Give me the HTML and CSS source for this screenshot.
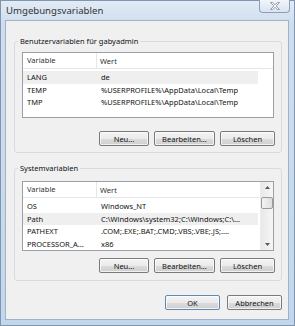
FILE: index.html
```html
<!DOCTYPE html>
<html lang="de">
<head>
  <meta charset="UTF-8">
  <title>Umgebungsvariablen</title>
  <link rel="stylesheet" href="styles.css">
</head>
<body>
  <div class="window">
    <div class="titlebar">
      <span class="title">Umgebungsvariablen</span>
      <button class="close" title="Schließen">
        <svg width="10" height="8" viewBox="0 0 10 8">
          <polygon points="0.5,0.5 2.6,0.5 5,2.8 7.4,0.5 9.5,0.5 6.1,4 9.5,7.5 7.4,7.5 5,5.2 2.6,7.5 0.5,7.5 3.9,4" fill="#fff" stroke="#7d8a99" stroke-width="0.8"/>
        </svg>
      </button>
    </div>

    <div class="client">
      <!-- Benutzervariablen -->
      <fieldset class="group group-user">
        <legend>Benutzervariablen für gabyadmin</legend>
        <div class="list list-user">
          <div class="list-body">
            <div class="list-head">
              <span class="col-var">Variable</span>
              <span class="col-val">Wert</span>
            </div>
            <div class="rows">
              <div class="row hot"><span class="col-var">LANG</span><span class="col-val">de</span></div>
              <div class="row"><span class="col-var">TEMP</span><span class="col-val">%USERPROFILE%\AppData\Local\Temp</span></div>
              <div class="row"><span class="col-var">TMP</span><span class="col-val">%USERPROFILE%\AppData\Local\Temp</span></div>
            </div>
          </div>
        </div>
        <div class="buttons">
          <button class="btn btn-new">Neu...</button>
          <button class="btn btn-edit">Bearbeiten...</button>
          <button class="btn btn-del">Löschen</button>
        </div>
      </fieldset>

      <!-- Systemvariablen -->
      <fieldset class="group group-sys">
        <legend>Systemvariablen</legend>
        <div class="list list-sys">
          <div class="list-body">
            <div class="list-head">
              <span class="col-var">Variable</span>
              <span class="col-val">Wert</span>
            </div>
            <div class="rows">
              <div class="row"><span class="col-var">OS</span><span class="col-val">Windows_NT</span></div>
              <div class="row hot"><span class="col-var">Path</span><span class="col-val">C:\Windows\system32;C:\Windows;C:\...</span></div>
              <div class="row"><span class="col-var">PATHEXT</span><span class="col-val">.COM;.EXE;.BAT;.CMD;.VBS;.VBE;.JS;....</span></div>
              <div class="row"><span class="col-var">PROCESSOR_A...</span><span class="col-val">x86</span></div>
            </div>
          </div>
          <div class="scrollbar">
            <span class="arrow">
              <svg width="5" height="3" viewBox="0 0 5 3"><polygon points="0,3 2.5,0 5,3" fill="#5a5a5a"/></svg>
            </span>
            <span class="track"><span class="thumb"></span></span>
            <span class="arrow">
              <svg width="5" height="3" viewBox="0 0 5 3"><polygon points="0,0 5,0 2.5,3" fill="#5a5a5a"/></svg>
            </span>
          </div>
        </div>
        <div class="buttons">
          <button class="btn btn-new">Neu...</button>
          <button class="btn btn-edit">Bearbeiten...</button>
          <button class="btn btn-del">Löschen</button>
        </div>
      </fieldset>

      <div class="dialog-buttons">
        <button class="btn btn-ok">OK</button>
        <button class="btn btn-cancel">Abbrechen</button>
      </div>
    </div>
  </div>
</body>
</html>
```

FILE: styles.css
```css
html, body {
  margin: 0;
  padding: 0;
}

body {
  width: 295px;
  height: 326px;
  overflow: hidden;
  font-family: "Noto Sans", "Open Sans", sans-serif;
  font-size: 7.5px;
  color: #111;
}

.window {
  height: 326px;
  display: flex;
  flex-direction: column;
  background: linear-gradient(to bottom, #e3ecf6 0, #cfdeef 22px, #c3d7ec 100%);
  box-shadow: inset 0 0 0 1px #8196ad;
  box-sizing: border-box;
}

.titlebar {
  height: 20px;
  display: flex;
  align-items: flex-start;
}

.title {
  font-size: 9.6px;
  line-height: 13px;
  margin: 4px 0 0 6px;
  color: #333;
}

.close {
  margin: 0 5px 0 auto;
  width: 31px;
  height: 13px;
  padding: 0;
  border: 1px solid #8c9fb5;
  border-top: none;
  border-radius: 0 0 4px 4px;
  background: linear-gradient(to bottom, #f1f5fa, #d8e3f0);
  display: flex;
  align-items: center;
  justify-content: center;
}

.client {
  flex: 1;
  margin: 0 6px 6px 5px;
  background: #f0f0f0;
  border: 1px solid #9fb2c7;
  display: flex;
  flex-direction: column;
}

.group {
  margin: 0 6px 0 8px;
  padding: 0 7px;
  border: 1px solid #d5dbe1;
  border-radius: 3px;
  min-width: 0;
}

.group legend {
  padding: 0 2px;
  margin-left: -4px;
  line-height: 11px;
}

.group-user {
  margin-top: 15px;
  padding-top: 5px;
  padding-bottom: 6px;
}

.group-sys {
  margin-top: 10px;
  padding-top: 7px;
  padding-bottom: 7px;
}

.list {
  background: #fff;
  border: 1px solid #9c9fa4;
  display: flex;
}

.list-user {
  height: 66px;
  box-sizing: border-box;
}

.list-sys {
  height: 70px;
  box-sizing: border-box;
}

.list-body {
  flex: 1;
  min-width: 0;
}

.list-head {
  height: 15px;
  border-bottom: 1px solid #e3e6ea;
  display: flex;
  align-items: center;
  color: #333;
}

.list-head .col-var {
  border-right: 1px solid #e3e6ea;
  height: 15px;
  line-height: 15px;
}

.col-var {
  width: 74px;
  padding-left: 4px;
  box-sizing: border-box;
  flex-shrink: 0;
  white-space: nowrap;
  overflow: hidden;
}

.col-val {
  padding-left: 3px;
  white-space: nowrap;
  overflow: hidden;
}

.rows {
  padding-top: 2px;
  width: 235px;
}

.row {
  height: 12.5px;
  line-height: 12.5px;
  display: flex;
}

.row .col-var {
  width: 75px;
}

.hot {
  background: #efefef;
}

.scrollbar {
  width: 12px;
  display: flex;
  flex-direction: column;
  background: linear-gradient(to right, #e9e9e9, #f5f5f5);
  border-left: 1px solid #ededed;
}

.arrow {
  height: 11px;
  display: flex;
  align-items: center;
  justify-content: center;
}

.track {
  flex: 1;
  padding-top: 4px;
}

.thumb {
  display: block;
  height: 12px;
  border: 1px solid #9a9a9a;
  border-radius: 2px;
  background: linear-gradient(to right, #f3f3f3, #dedede);
  box-sizing: border-box;
}

.buttons {
  display: flex;
  justify-content: flex-end;
  gap: 5px;
}

.group-user .buttons {
  margin-top: 13px;
}

.group-sys .buttons {
  margin-top: 7px;
}

.btn {
  height: 15px;
  padding: 0;
  font-family: inherit;
  font-size: 7.5px;
  color: #111;
  border: 1px solid #7a7a7a;
  border-radius: 2px;
  background: linear-gradient(to bottom, #f4f4f4 0, #ebebeb 50%, #dcdcdc 51%, #cfcfcf 100%);
  box-shadow: inset 0 0 0 1px rgba(255, 255, 255, 0.7);
}

.btn-new {
  width: 50px;
}

.btn-edit {
  width: 61px;
}

.btn-del {
  width: 55px;
  margin-right: -1px;
}

.dialog-buttons {
  display: flex;
  justify-content: flex-end;
  gap: 7px;
  margin: 14px 6px 0 0;
}

.btn-ok, .btn-cancel {
  width: 55px;
}

.btn-ok {
  border-color: #5f8ab6;
}
```
